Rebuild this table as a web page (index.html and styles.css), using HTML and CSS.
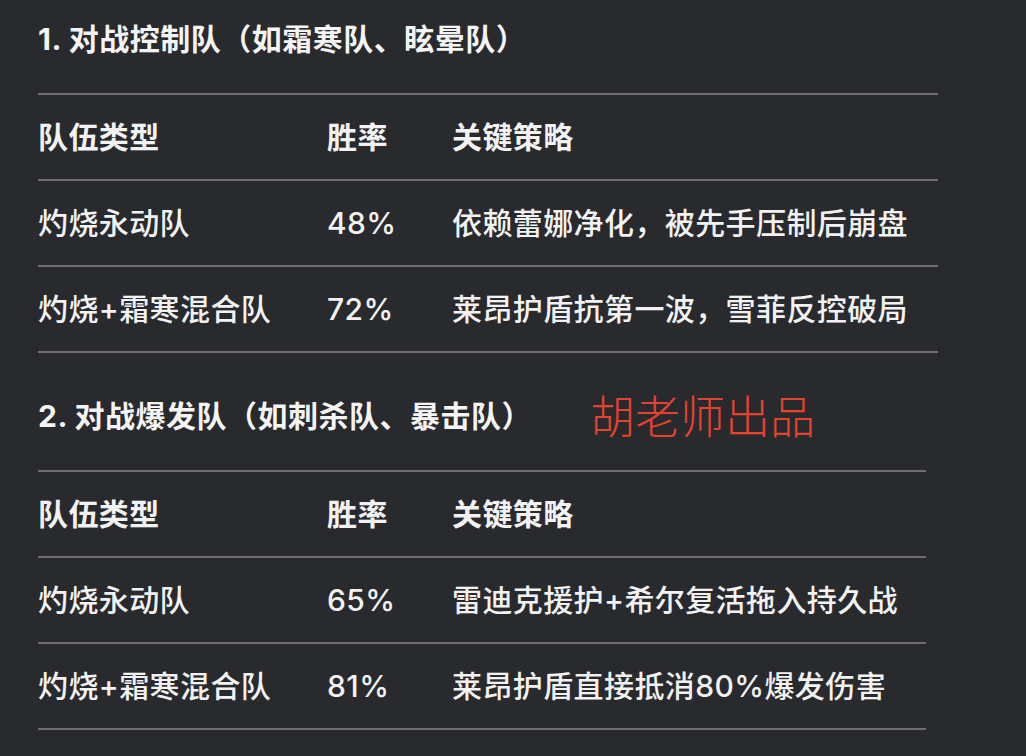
FILE: index.html
```html
<!DOCTYPE html>
<html lang="zh-CN">
<head>
<meta charset="utf-8">
<title>对战策略</title>
<link rel="stylesheet" href="styles.css">
</head>
<body>
<main class="page">
  <section class="block">
    <div class="heading-row">
      <h3 class="heading">1. 对战控制队（如霜寒队、眩晕队）</h3>
    </div>
    <table class="grid grid-wide">
      <colgroup><col class="c-type"><col class="c-rate"><col class="c-plan"></colgroup>
      <thead>
        <tr><th>队伍类型</th><th>胜率</th><th>关键策略</th></tr>
      </thead>
      <tbody>
        <tr><td>灼烧永动队</td><td>48%</td><td>依赖蕾娜净化，被先手压制后崩盘</td></tr>
        <tr><td>灼烧+霜寒混合队</td><td>72%</td><td>莱昂护盾抗第一波，雪菲反控破局</td></tr>
      </tbody>
    </table>
  </section>
  <section class="block block-second">
    <div class="heading-row">
      <h3 class="heading heading-fixed">2. 对战爆发队（如刺杀队、暴击队）</h3>
      <span class="stamp">胡老师出品</span>
    </div>
    <table class="grid grid-narrow">
      <colgroup><col class="c-type"><col class="c-rate"><col class="c-plan"></colgroup>
      <thead>
        <tr><th>队伍类型</th><th>胜率</th><th>关键策略</th></tr>
      </thead>
      <tbody>
        <tr><td>灼烧永动队</td><td>65%</td><td>雷迪克援护+希尔复活拖入持久战</td></tr>
        <tr><td>灼烧+霜寒混合队</td><td>81%</td><td>莱昂护盾直接抵消80%爆发伤害</td></tr>
      </tbody>
    </table>
  </section>
</main>
</body>
</html>
```

FILE: styles.css
```css
html, body {
  margin: 0;
  padding: 0;
  background: #292a2e;
}

body {
  font-family: Inter, "Noto Sans CJK SC", "Noto Sans", sans-serif;
  color: #f2f2f2;
  height: 756px;
  overflow: hidden;
}

.page {
  padding: 19px 0 0 38px;
}

.block-second {
  margin-top: 43px;
}

.heading-row {
  display: flex;
  align-items: center;
  height: 40px;
  margin-bottom: 35px;
}

.heading {
  margin: 0;
  font-size: 30px;
  line-height: 40px;
  font-weight: 700;
  letter-spacing: 0.5px;
  color: #f4f4f4;
  white-space: nowrap;
}

.heading-fixed {
  width: 554px;
  flex: none;
}

.stamp {
  font-size: 45px;
  line-height: 40px;
  font-weight: 300;
  color: #e5432d;
  position: relative;
  top: 2px;
  left: -2px;
  white-space: nowrap;
}

.grid {
  border-collapse: collapse;
  table-layout: fixed;
  border-top: 2px solid #6e6e6e;
  margin-top: -1px;
}

.grid-wide {
  width: 900px;
}

.grid-narrow {
  width: 888px;
}

.c-type {
  width: 289px;
}

.c-rate {
  width: 125px;
}

.grid th,
.grid td {
  padding: 21px 0;
  font-size: 30px;
  line-height: 42px;
  letter-spacing: 0.4px;
  text-align: left;
  white-space: nowrap;
  border-bottom: 2px solid #6e6e6e;
}

.grid th {
  font-weight: 700;
}

.grid td {
  font-weight: 500;
}
```
